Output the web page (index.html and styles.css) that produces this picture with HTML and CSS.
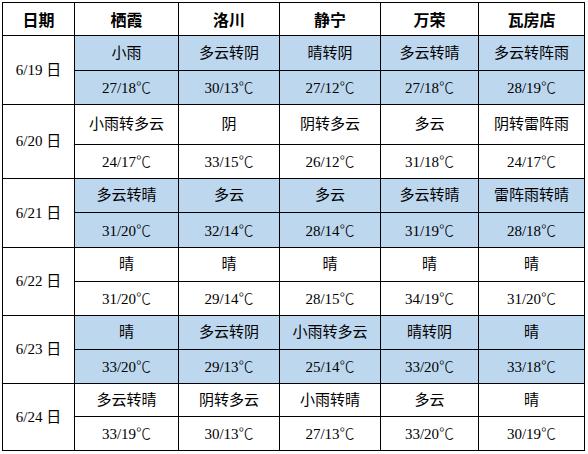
FILE: index.html
```html
<!DOCTYPE html>
<html lang="zh">
<head>
<meta charset="utf-8">
<link rel="stylesheet" href="styles.css">
</head>
<body>
<table class="wx">
  <colgroup>
    <col class="c-date"><col class="c1"><col class="c2"><col class="c3"><col class="c4"><col class="c5">
  </colgroup>
  <thead>
    <tr class="head"><th>日期</th><th>栖霞</th><th>洛川</th><th>静宁</th><th>万荣</th><th>瓦房店</th></tr>
  </thead>
  <tbody>
    <tr class="r35 blue"><td class="date" rowspan="2">6/19 日</td><td>小雨</td><td>多云转阴</td><td>晴转阴</td><td>多云转晴</td><td>多云转阵雨</td></tr>
    <tr class="r34 blue"><td>27/18<span class="deg">℃</span></td><td>30/13<span class="deg">℃</span></td><td>27/12<span class="deg">℃</span></td><td>27/18<span class="deg">℃</span></td><td>28/19<span class="deg">℃</span></td></tr>
    <tr class="r40"><td class="date" rowspan="2">6/20 日</td><td>小雨转多云</td><td>阴</td><td>阴转多云</td><td>多云</td><td>阴转雷阵雨</td></tr>
    <tr class="r34"><td>24/17<span class="deg">℃</span></td><td>33/15<span class="deg">℃</span></td><td>26/12<span class="deg">℃</span></td><td>31/18<span class="deg">℃</span></td><td>24/17<span class="deg">℃</span></td></tr>
    <tr class="r34 blue"><td class="date" rowspan="2">6/21 日</td><td>多云转晴</td><td>多云</td><td>多云</td><td>多云转晴</td><td>雷阵雨转晴</td></tr>
    <tr class="r35 blue"><td>31/20<span class="deg">℃</span></td><td>32/14<span class="deg">℃</span></td><td>28/14<span class="deg">℃</span></td><td>31/19<span class="deg">℃</span></td><td>28/18<span class="deg">℃</span></td></tr>
    <tr class="r34"><td class="date" rowspan="2">6/22 日</td><td>晴</td><td>晴</td><td>晴</td><td>晴</td><td>晴</td></tr>
    <tr class="r34"><td>31/20<span class="deg">℃</span></td><td>29/14<span class="deg">℃</span></td><td>28/15<span class="deg">℃</span></td><td>34/19<span class="deg">℃</span></td><td>31/20<span class="deg">℃</span></td></tr>
    <tr class="r34 blue"><td class="date" rowspan="2">6/23 日</td><td>晴</td><td>多云转阴</td><td>小雨转多云</td><td>晴转阴</td><td>晴</td></tr>
    <tr class="r34 blue"><td>33/20<span class="deg">℃</span></td><td>29/13<span class="deg">℃</span></td><td>25/14<span class="deg">℃</span></td><td>33/20<span class="deg">℃</span></td><td>33/18<span class="deg">℃</span></td></tr>
    <tr class="r33"><td class="date" rowspan="2">6/24 日</td><td>多云转晴</td><td>阴转多云</td><td>小雨转晴</td><td>多云</td><td>晴</td></tr>
    <tr class="r34"><td>33/19<span class="deg">℃</span></td><td>30/13<span class="deg">℃</span></td><td>27/13<span class="deg">℃</span></td><td>33/20<span class="deg">℃</span></td><td>30/19<span class="deg">℃</span></td></tr>
  </tbody>
</table>
</body>
</html>
```

FILE: styles.css
```css
html, body {
  margin: 0;
  padding: 0;
  background: #ffffff;
}
body {
  padding: 2px 0 0 2px;
  font-family: "Liberation Serif", "Noto Sans CJK SC", serif;
  font-size: 15px;
  color: #000;
}
.wx {
  border-collapse: collapse;
  table-layout: fixed;
  width: 583px;
}
.c-date { width: 72px; }
.c1 { width: 104px; }
.c2 { width: 101px; }
.c3 { width: 101px; }
.c4 { width: 98px; }
.c5 { width: 106px; }
.wx th, .wx td {
  border: 1px solid #000;
  padding: 0;
  text-align: center;
  vertical-align: middle;
  white-space: nowrap;
  line-height: 1;
}
.wx th {
  font-family: "Noto Sans CJK SC", sans-serif;
  font-weight: 700;
  font-size: 16px;
}
.head { height: 33px; }
.r33 { height: 33px; }
.r34 { height: 34px; }
.r35 { height: 35px; }
.r40 { height: 40px; }
.blue td { background: #bdd7ee; }
.blue td.date { background: #ffffff; }
.deg {
  font-family: "Noto Sans CJK SC", sans-serif;
  font-weight: 300;
}
```
